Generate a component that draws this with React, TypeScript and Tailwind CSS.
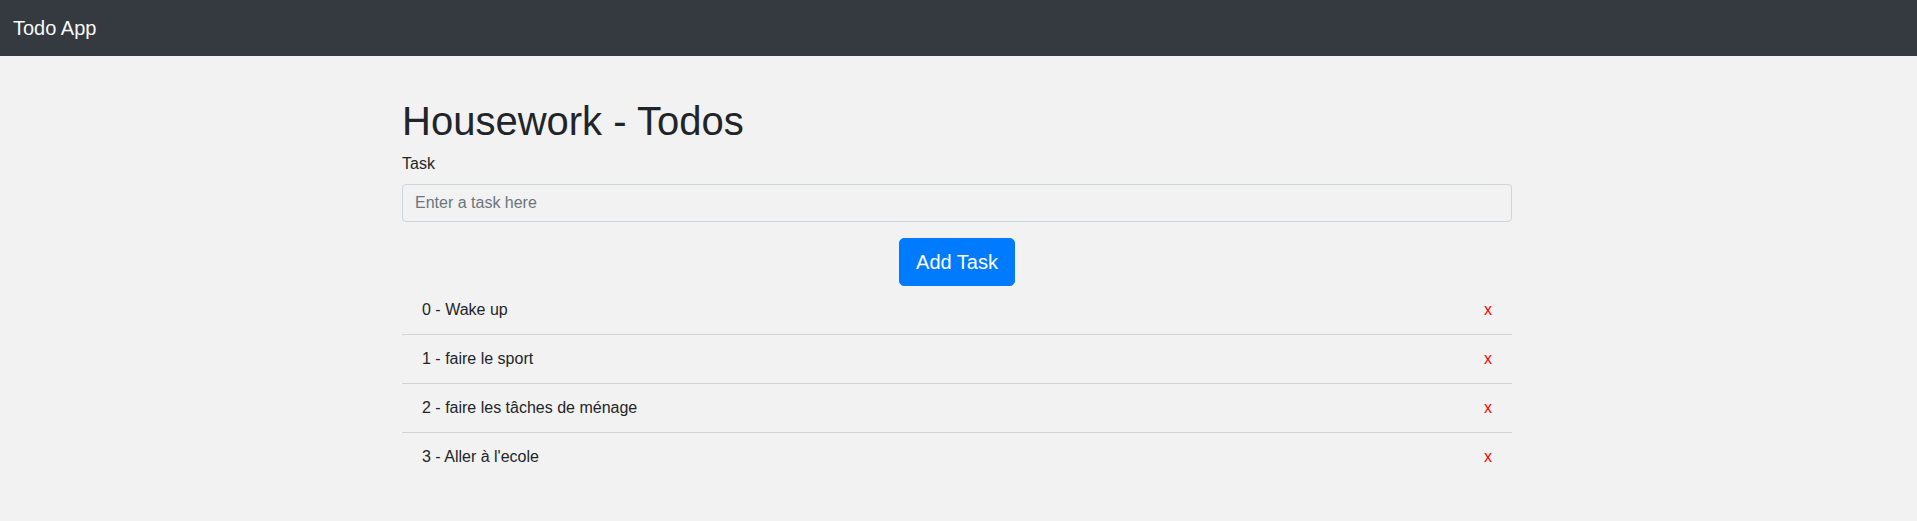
import React, { useState } from 'react';

const initialTasks = [
  'Wake up',
  'faire le sport',
  'faire les tâches de ménage',
  "Aller à l'ecole",
];

export default function App() {
  const [tasks, setTasks] = useState<string[]>(initialTasks);
  const [value, setValue] = useState('');

  const addTask = () => {
    if (!value.trim()) return;
    setTasks([...tasks, value.trim()]);
    setValue('');
  };

  return (
    <div className="min-h-screen bg-[#f2f2f2] text-[#212529] font-['Liberation_Sans',Arial,sans-serif] text-base">
      {/* Navbar */}
      <nav className="h-[56px] bg-[#343a40] flex items-center pl-[13px]">
        <span className="text-[20px] leading-[30px] text-[#f8f8f8]">Todo App</span>
      </nav>

      <div className="pr-[3px]">
        <div className="w-[1110px] mx-auto">
          <h1 className="mt-[41px] mb-[7px] text-[40px] leading-[48px] font-normal">Housework - Todos</h1>

          <label className="block leading-6 mb-[8px]">Task</label>
          <input
            value={value}
            onChange={(e) => setValue(e.target.value)}
            placeholder="Enter a task here"
            className="block w-full h-[38px] px-3 border border-[#ced4da] rounded-[4px] bg-transparent leading-6 placeholder:text-[#6c757d] outline-none mb-4"
          />

          <div className="flex justify-center">
            <button
              onClick={addTask}
              className="h-[48px] px-4 bg-[#007bff] border border-[#007bff] text-white text-[20px] leading-[30px] rounded-[5px]"
            >
              Add Task
            </button>
          </div>

          <ul>
            {tasks.map((task, i) => (
              <li
                key={i}
                className="flex items-center justify-between px-5 py-3 leading-6 border-b border-[#d4d4d4] last:border-b-0"
              >
                <span>
                  {i} - {task}
                </span>
                <button
                  onClick={() => setTasks(tasks.filter((_, j) => j !== i))}
                  className="text-[#ff0000] leading-6"
                >
                  x
                </button>
              </li>
            ))}
          </ul>
        </div>
      </div>
    </div>
  );
}
